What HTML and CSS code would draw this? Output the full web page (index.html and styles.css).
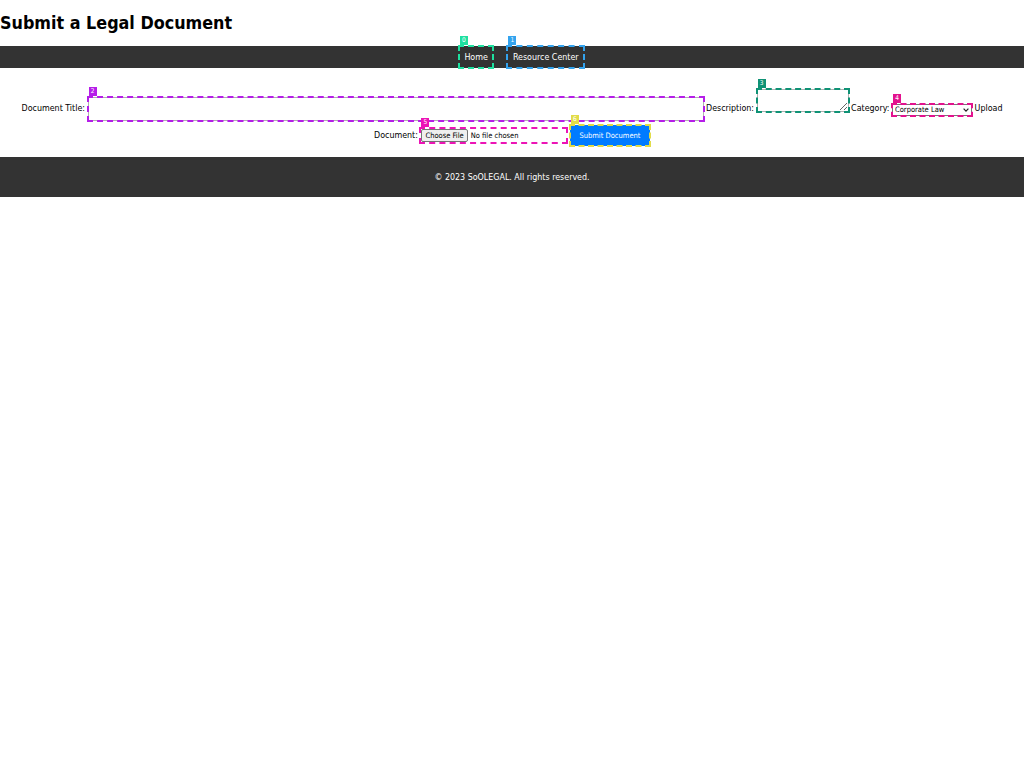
FILE: index.html
```html
<!DOCTYPE html>
<html>
<head>
<meta charset="utf-8">
<title>Submit a Legal Document</title>
<link rel="stylesheet" href="styles.css">
</head>
<body>
<header class="site-header">
  <h1 class="page-title">Submit a Legal Document</h1>
</header>
<nav class="main-nav">
  <span class="mark mark-0"><a href="#" class="nav-link">Home</a><i class="badge">0</i></span>
  <span class="mark mark-1"><a href="#" class="nav-link">Resource Center</a><i class="badge">1</i></span>
</nav>
<main class="content">
  <form class="doc-form">
    <label class="field-label">Document Title:</label>
    <span class="mark mark-2 ctl-title"><input type="text" class="ctl title-input"><i class="badge">2</i></span>
    <label class="field-label">Description:</label>
    <span class="mark mark-3 ctl-desc"><textarea class="ctl desc-input"></textarea><i class="badge">3</i></span>
    <label class="field-label">Category:</label>
    <span class="mark mark-4 ctl-cat"><select class="ctl cat-input"><option>Corporate Law</option><option>Family Law</option><option>Criminal Law</option></select><svg class="chevron" width="6" height="4" viewBox="0 0 6 4" aria-hidden="true"><path d="M0.6 0.7 L3 3.1 L5.4 0.7" fill="none" stroke="#222" stroke-width="1.2"/></svg><i class="badge">4</i></span>
    <label class="field-label">Upload Document:</label>
    <span class="mark mark-5 ctl-file"><input type="file" class="ctl file-input"><i class="badge">5</i></span>
    <span class="mark mark-6 ctl-btn"><button type="submit" class="ctl submit-btn">Submit Document</button><i class="badge">6</i></span>
  </form>
</main>
<footer class="site-footer">
  <p class="footer-text">© 2023 SoOLEGAL. All rights reserved.</p>
</footer>
</body>
</html>
```

FILE: styles.css
```css
body {
  margin: 0;
  font-family: "DejaVu Sans Condensed", "DejaVu Sans", sans-serif;
  font-size: 8.85px;
  color: #000;
  background: #fff;
}

.site-header {
  padding: 0;
}
.page-title {
  margin: 12px 0 13px;
  font-size: 17.8px;
  line-height: 21px;
  font-weight: bold;
}

.main-nav {
  background: #333;
  height: 22px;
  display: flex;
  justify-content: center;
  gap: 14px;
  padding-left: 19px;
}
.main-nav .mark {
  display: block;
}
.nav-link {
  display: block;
  color: #fff;
  text-decoration: none;
  padding: 0 5.5px;
  line-height: 23px;
}

.content {
  padding: 21px 10px 11px;
}
.doc-form {
  margin: 0;
  text-align: center;
  line-height: 10px;
}

.ctl {
  display: block;
  margin: 0;
  box-sizing: border-box;
  font-family: "DejaVu Sans Condensed", "DejaVu Sans", sans-serif;
  font-size: 7.5px;
}
.ctl-desc { vertical-align: -1px; }
.ctl-cat { vertical-align: -1px; }
.ctl-btn { margin-top: 4px; }

.title-input {
  width: 616px;
  height: 24px;
  padding: 1px 3px;
  border: 1px solid #b0b0b0;
  background: #fff;
}
.desc-input {
  width: 92px;
  height: 23px;
  padding: 1px 2px;
  border: 1px solid #b0b0b0;
  resize: both;
  background: #fff;
}
.cat-input {
  -webkit-appearance: none;
  appearance: none;
  width: 80px;
  height: 12px;
  padding: 0 8px 0 2px;
  border: 1px solid #767676;
  border-radius: 0;
  background: #fff;
  color: #000;
  line-height: 10px;
}
.chevron {
  position: absolute;
  right: 3px;
  top: 4px;
  pointer-events: none;
}
.file-input {
  width: 147px;
  height: 15px;
  padding: 1px 0;
  line-height: 13px;
  text-align: left;
}
.file-input::file-selector-button {
  font-family: "DejaVu Sans Condensed", "DejaVu Sans", sans-serif;
  font-size: 7.5px;
  height: 13px;
  padding: 0 3px;
  margin: 0 3px 0 1px;
  border: 1px solid #767676;
  border-radius: 2px;
  background: #efefef;
  color: #000;
}
.submit-btn {
  width: 80px;
  height: 21px;
  padding: 0;
  border: 0;
  background: #007bff;
  color: #fff;
  cursor: pointer;
}

.site-footer {
  background: #333;
  color: #fff;
  height: 40px;
  display: flex;
  align-items: center;
  justify-content: center;
}
.footer-text {
  margin: 0;
}

/* element markers */
.mark {
  position: relative;
  display: inline-block;
  line-height: 0;
}
.mark::after {
  content: "";
  position: absolute;
  inset: -1px;
  border: 2px dashed var(--c);
  pointer-events: none;
}
.badge {
  position: absolute;
  left: 1px;
  bottom: 100%;
  margin-bottom: 1px;
  width: 8px;
  height: 9px;
  background: var(--c);
  color: #fff;
  font-style: normal;
  font-size: 6.5px;
  line-height: 9px;
  text-align: center;
}
.mark-0 { --c: #1fe0a0; }
.mark-1 { --c: #33a3ee; }
.mark-2 { --c: #b51ee8; }
.mark-3 { --c: #0f9275; }
.mark-4 { --c: #e3128e; }
.mark-5 { --c: #ec14b6; }
.mark-6 { --c: #e2dc48; }
```
